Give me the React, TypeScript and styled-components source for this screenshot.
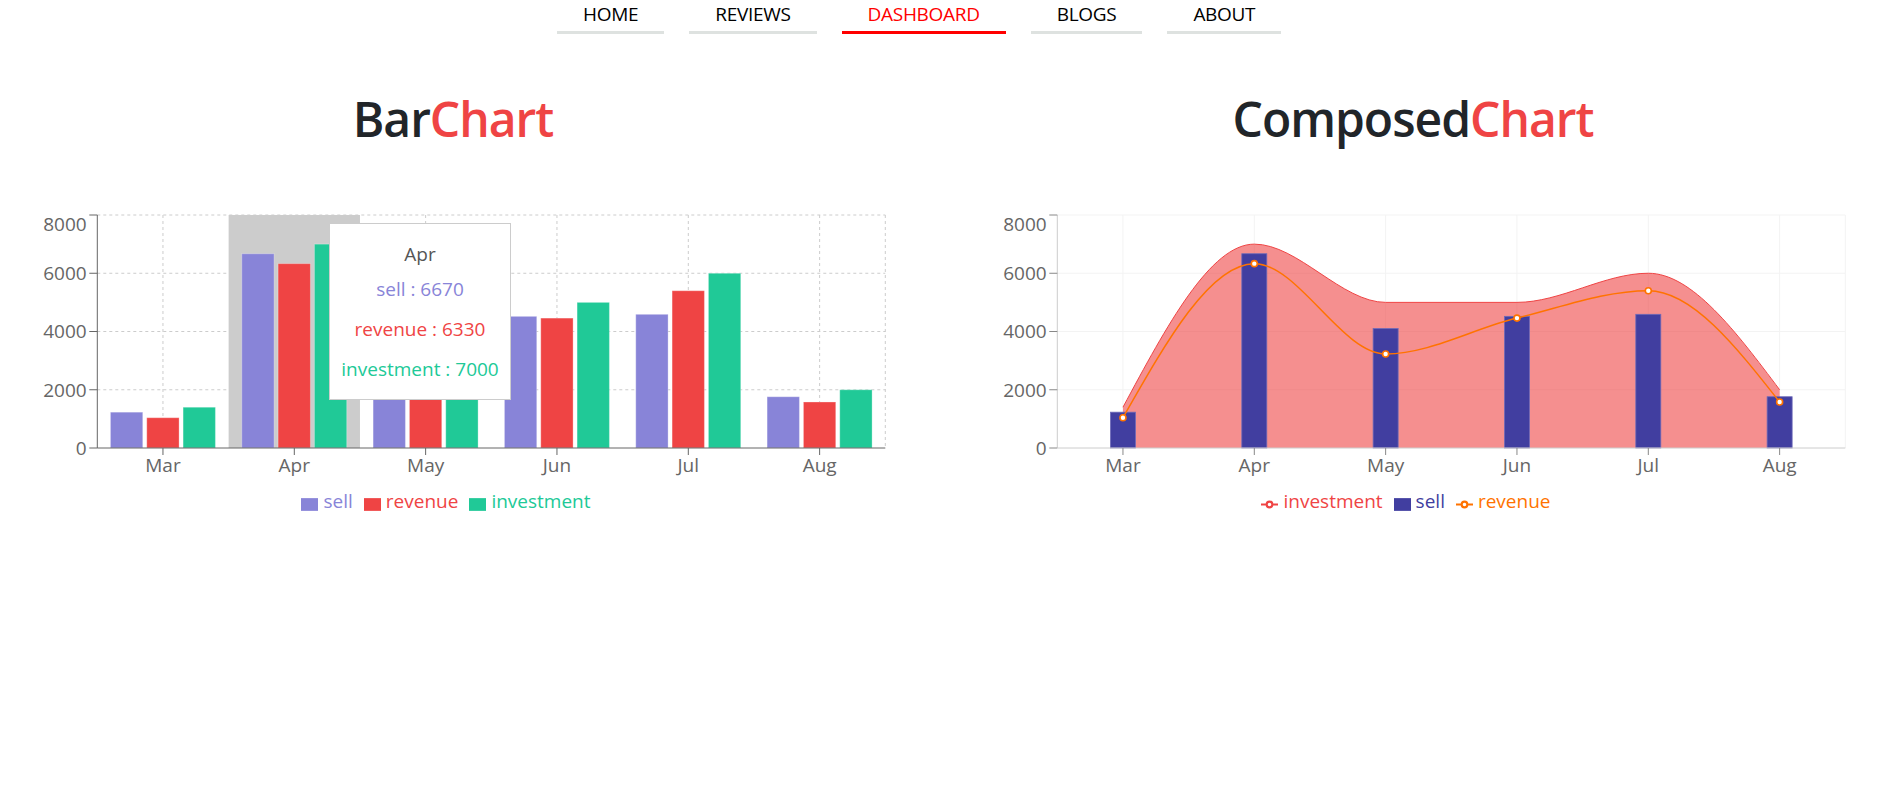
import React from "react";
import styled, { createGlobalStyle } from "styled-components";

const GlobalStyle = createGlobalStyle`
  html, body { margin: 0; padding: 0; background: #fff; }
  body { font-family: "Open Sans", "Noto Sans", sans-serif; }
`;

const MONTHS = ["Mar", "Apr", "May", "Jun", "Jul", "Aug"];
const SELL = [1230, 6670, 4100, 4520, 4590, 1760];
const REVENUE = [1040, 6330, 3230, 4460, 5400, 1580];
const INVEST = [1400, 7000, 5000, 5000, 6000, 2000];

const C_SELL = "#8884d8";
const C_REV = "#ef4444";
const C_INV = "#20c997";
const C_DARK = "#413ea0";
const C_ORANGE = "#ff7300";

const X0 = 97.3;
const PW = 788;
const TOP = 15;
const BASE = 248;
const PH = BASE - TOP;
const CW = PW / 6;
const yv = (v: number) => BASE - (v / 8000) * PH;
const cx = (i: number) => X0 + CW * (i + 0.5);
const TICKS = [0, 2000, 4000, 6000, 8000];
const labelY = (v: number) => (v === 8000 ? TOP + 9 : yv(v)) + 6.8;

function monotonePath(pts: [number, number][]) {
  const n = pts.length;
  const s: number[] = [];
  for (let i = 0; i < n - 1; i++) s.push((pts[i + 1][1] - pts[i][1]) / (pts[i + 1][0] - pts[i][0]));
  const sign = (x: number) => (x < 0 ? -1 : 1);
  const m: number[] = new Array(n).fill(0);
  for (let i = 1; i < n - 1; i++) {
    const h0 = pts[i][0] - pts[i - 1][0];
    const h1 = pts[i + 1][0] - pts[i][0];
    const s0 = s[i - 1];
    const s1 = s[i];
    const p = (s0 * h1 + s1 * h0) / (h0 + h1);
    m[i] = (sign(s0) + sign(s1)) * Math.min(Math.abs(s0), Math.abs(s1), 0.5 * Math.abs(p)) || 0;
  }
  m[0] = (3 * s[0] - m[1]) / 2;
  m[n - 1] = (3 * s[n - 2] - m[n - 2]) / 2;
  let d = `M${pts[0][0]},${pts[0][1]}`;
  for (let i = 0; i < n - 1; i++) {
    const [x0, y0] = pts[i];
    const [x1, y1] = pts[i + 1];
    const dx = (x1 - x0) / 3;
    d += ` C${x0 + dx},${y0 + dx * m[i]} ${x1 - dx},${y1 - dx * m[i + 1]} ${x1},${y1}`;
  }
  return d;
}

/* ---------- layout ---------- */

const Page = styled.div`
  width: 1883px;
  height: 800px;
  overflow: hidden;
  background: #fff;
`;

const Nav = styled.nav`
  display: flex;
  gap: 25px;
  padding-left: 557px;
  height: 34px;
`;

const NavLink = styled.a<{ $active?: boolean }>`
  display: block;
  padding: 0 26px;
  height: 31px;
  line-height: 29px;
  border-bottom: 3px solid ${(p) => (p.$active ? "#ff0000" : "#dee2e0")};
  color: ${(p) => (p.$active ? "#ff0000" : "#000")};
  font-family: "Open Sans", "Noto Sans", sans-serif;
  font-size: 19px;
  letter-spacing: -0.3px;
  text-decoration: none;
  cursor: pointer;
`;

const Grid = styled.main`
  display: grid;
  grid-template-columns: 906px 906px;
  column-gap: 54px;
  margin-top: 56px;
`;

const Panel = styled.section`
  display: flex;
  flex-direction: column;
`;

const Title = styled.h1`
  margin: 0;
  text-align: center;
  font-family: "Open Sans", "Noto Sans", sans-serif;
  font-weight: 600;
  font-size: 48px;
  line-height: 58px;
  letter-spacing: -1px;
  color: #212529;
`;

const Accent = styled.span`
  color: #ef4444;
`;

const ChartBox = styled.div`
  position: relative;
  margin-top: 52px;
  height: 290px;
`;

const ChartSvg = styled.svg`
  display: block;
  font-family: "Open Sans", "Noto Sans", sans-serif;
  font-size: 19px;
`;

const Legend = styled.ul`
  display: flex;
  justify-content: center;
  gap: 11px;
  margin: 0;
  padding: 0 14px 0 0;
  list-style: none;
  height: 23px;
`;

const LegendItem = styled.li<{ $color: string }>`
  display: flex;
  align-items: flex-start;
  gap: 5px;
  color: ${(p) => p.$color};
  font-size: 19px;
  line-height: 23px;
`;

const LegendIcon = styled.svg`
  flex: none;
  margin-top: 5.5px;
`;

const Tooltip = styled.div`
  position: absolute;
  left: 329px;
  top: 23px;
  width: 182px;
  box-sizing: border-box;
  padding: 10px;
  background: #fff;
  border: 1px solid #ccc;
  text-align: center;
  font-size: 19px;
  white-space: nowrap;
`;

const TooltipLabel = styled.div`
  height: 35px;
  line-height: 40px;
  color: #555;
`;

const TooltipRow = styled.div<{ $color: string }>`
  line-height: 40px;
  color: ${(p) => p.$color};
`;

/* ---------- legend ---------- */

type LegendEntry = { label: string; color: string; kind: "rect" | "line" };

const LegendView = ({ items }: { items: LegendEntry[] }) => (
  <Legend>
    {items.map((it) => (
      <LegendItem key={it.label} $color={it.color}>
        <LegendIcon width={17} height={17} viewBox="0 0 32 32">
          {it.kind === "rect" ? (
            <path d="M0,4h32v24h-32z" fill={it.color} />
          ) : (
            <path
              d="M0,16h10.667A5.333,5.333,0,1,1,21.333,16H32M21.333,16A5.333,5.333,0,1,1,10.667,16"
              stroke={it.color}
              strokeWidth={4}
              fill="none"
            />
          )}
        </LegendIcon>
        {it.label}
      </LegendItem>
    ))}
  </Legend>
);

/* ---------- axes ---------- */

const Axes = ({ lineColor, tickColor }: { lineColor: string; tickColor: string }) => (
  <g>
    <line x1={X0} y1={TOP} x2={X0} y2={BASE} stroke={lineColor} />
    {TICKS.map((t) => (
      <g key={t}>
        <line x1={X0 - 8} y1={yv(t)} x2={X0} y2={yv(t)} stroke={tickColor} />
        <text x={X0 - 10.6} y={labelY(t)} textAnchor="end" fill="#666">
          {t}
        </text>
      </g>
    ))}
    <line x1={X0} y1={BASE} x2={X0 + PW} y2={BASE} stroke={lineColor} />
    {MONTHS.map((m, i) => (
      <g key={m}>
        <line x1={cx(i)} y1={BASE} x2={cx(i)} y2={BASE + 7} stroke={tickColor} />
        <text x={cx(i)} y={271.7} textAnchor="middle" fill="#666">
          {m}
        </text>
      </g>
    ))}
  </g>
);

const GridLines = ({ color, dashed }: { color: string; dashed?: boolean }) => (
  <g stroke={color} strokeDasharray={dashed ? "3 3" : undefined}>
    {[2000, 4000, 6000, 8000].map((t) => (
      <line key={t} x1={X0} y1={yv(t)} x2={X0 + PW} y2={yv(t)} />
    ))}
    {MONTHS.map((m, i) => (
      <line key={m} x1={cx(i)} y1={TOP} x2={cx(i)} y2={BASE} />
    ))}
    <line x1={X0 + PW} y1={TOP} x2={X0 + PW} y2={BASE} />
  </g>
);

/* ---------- bar chart ---------- */

const BAR_W = 32.33;
const BAR_STEP = 36.33;
const BAR_OFF = 13.13;

const BarChartView = () => (
  <ChartBox>
    <ChartSvg width={906} height={290}>
      <GridLines color="#ccc" dashed />
      <rect x={X0 + CW} y={TOP} width={CW} height={PH} fill="#ccc" />
      {MONTHS.map((m, i) =>
        [SELL[i], REVENUE[i], INVEST[i]].map((v, k) => (
          <rect
            key={m + k}
            x={X0 + CW * i + BAR_OFF + k * BAR_STEP}
            y={yv(v)}
            width={BAR_W}
            height={BASE - yv(v)}
            fill={[C_SELL, C_REV, C_INV][k]}
            stroke="#fff"
            strokeOpacity={0.3}
          />
        ))
      )}
      <Axes lineColor="#666" tickColor="#666" />
    </ChartSvg>
    <Tooltip>
      <TooltipLabel>Apr</TooltipLabel>
      <TooltipRow $color={C_SELL}>sell : 6670</TooltipRow>
      <TooltipRow $color={C_REV}>revenue : 6330</TooltipRow>
      <TooltipRow $color={C_INV}>investment : 7000</TooltipRow>
    </Tooltip>
  </ChartBox>
);

/* ---------- composed chart ---------- */

const ComposedChartView = () => {
  const invPts = INVEST.map((v, i) => [cx(i), yv(v)] as [number, number]);
  const revPts = REVENUE.map((v, i) => [cx(i), yv(v)] as [number, number]);
  const invCurve = monotonePath(invPts);
  const areaD = `${invCurve} L${cx(5)},${BASE} L${cx(0)},${BASE} Z`;
  return (
    <ChartBox>
      <ChartSvg width={906} height={290}>
        <GridLines color="#f3f3f3" />
        <path d={areaD} fill={C_REV} fillOpacity={0.6} />
        <path d={invCurve} fill="none" stroke={C_REV} strokeWidth={1} />
        {SELL.map((v, i) => (
          <rect
            key={i}
            x={cx(i) - 12.5}
            y={yv(v)}
            width={25}
            height={BASE - yv(v)}
            fill={C_DARK}
            stroke="#6d6ab8"
            strokeWidth={0.8}
          />
        ))}
        <path d={monotonePath(revPts)} fill="none" stroke={C_ORANGE} strokeWidth={1.5} />
        {revPts.map(([x, y], i) => (
          <circle key={i} cx={x} cy={y} r={3} fill="#fff" stroke={C_ORANGE} strokeWidth={1.6} />
        ))}
        <Axes lineColor="#ccc" tickColor="#888" />
      </ChartSvg>
    </ChartBox>
  );
};

export default function App() {
  const navItems = ["HOME", "REVIEWS", "DASHBOARD", "BLOGS", "ABOUT"];
  return (
    <Page>
      <GlobalStyle />
      <Nav>
        {navItems.map((n) => (
          <NavLink key={n} $active={n === "DASHBOARD"}>
            {n}
          </NavLink>
        ))}
      </Nav>
      <Grid>
        <Panel>
          <Title>
            Bar<Accent>Chart</Accent>
          </Title>
          <BarChartView />
          <LegendView
            items={[
              { label: "sell", color: C_SELL, kind: "rect" },
              { label: "revenue", color: C_REV, kind: "rect" },
              { label: "investment", color: C_INV, kind: "rect" },
            ]}
          />
        </Panel>
        <Panel>
          <Title>
            Composed<Accent>Chart</Accent>
          </Title>
          <ComposedChartView />
          <LegendView
            items={[
              { label: "investment", color: C_REV, kind: "line" },
              { label: "sell", color: C_DARK, kind: "rect" },
              { label: "revenue", color: C_ORANGE, kind: "line" },
            ]}
          />
        </Panel>
      </Grid>
    </Page>
  );
}
